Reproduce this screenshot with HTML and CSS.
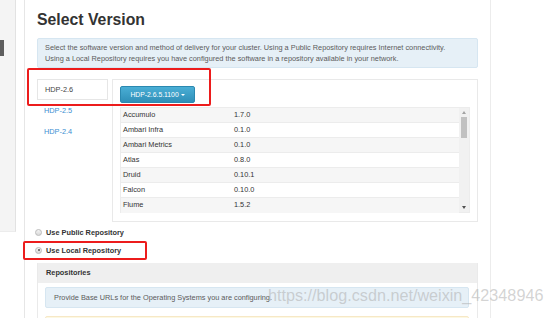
FILE: index.html
```html
<!DOCTYPE html>
<html>
<head>
<meta charset="utf-8">
<link rel="stylesheet" href="styles.css">
</head>
<body>
<div class="page">
  <aside class="side">
    <div class="side-panel"><div class="side-block"></div></div>
  </aside>
  <main class="main">
    <h1 class="title">Select Version</h1>
    <div class="alert-info">Select the software version and method of delivery for your cluster. Using a Public Repository requires Internet connectivity.<br>Using a Local Repository requires you have configured the software in a repository available in your network.</div>

    <div class="versions">
      <ul class="tabs">
        <li class="tab active">HDP-2.6</li>
        <li class="tab">HDP-2.5</li>
        <li class="tab">HDP-2.4</li>
      </ul>
      <div class="panel">
        <button class="btn">HDP-2.6.5.1100 <span class="caret"></span></button>
        <div class="table-wrap">
          <div class="rows">
            <div class="row odd"><span class="c1">Accumulo</span><span>1.7.0</span></div>
            <div class="row"><span class="c1">Ambari Infra</span><span>0.1.0</span></div>
            <div class="row odd"><span class="c1">Ambari Metrics</span><span>0.1.0</span></div>
            <div class="row"><span class="c1">Atlas</span><span>0.8.0</span></div>
            <div class="row odd"><span class="c1">Druid</span><span>0.10.1</span></div>
            <div class="row"><span class="c1">Falcon</span><span>0.10.0</span></div>
            <div class="row odd last"><span class="c1">Flume</span><span>1.5.2</span></div>
          </div>
          <div class="scrollbar">
            <span class="arrow up"></span>
            <span class="thumb"></span>
            <span class="spacer"></span>
            <span class="arrow down"></span>
          </div>
        </div>
      </div>
      <div class="mark mark-tabs"></div>
    </div>

    <div class="radios">
      <label class="radio"><span class="dot"></span>Use Public Repository</label>
      <label class="radio"><span class="dot checked"></span>Use Local Repository</label>
      <div class="mark mark-local"></div>
    </div>

    <div class="repos">
      <div class="repos-head">Repositories</div>
      <div class="repos-body">
        <div class="alert-info small">Provide Base URLs for the Operating Systems you are configuring.</div>
        <div class="alert-warn"></div>
      </div>
    </div>
  </main>
  <div class="rest"></div>
  <div class="watermark">https://blog.csdn.net/weixin_42348946</div>
</div>
</body>
</html>
```

FILE: styles.css
```css
* { box-sizing: border-box; }
html, body { margin: 0; padding: 0; background: #fff; }
body {
  width: 554px; height: 318px; overflow: hidden;
  font-family: "Liberation Sans", Arial, sans-serif;
  font-size: 7.35px; color: #333;
}
.page { position: relative; display: flex; width: 554px; height: 318px; }

.side { width: 24px; flex: none; }
.side-panel {
  width: 16px; height: 232px; background: #f4f4f4;
  border-right: 1px solid #e2e2e2; border-bottom: 1px solid #ececec;
  padding-top: 40px;
}
.side-block { width: 4px; height: 16px; background: #5e5e5e; }

.main {
  width: 467px; flex: none; height: 318px;
  border-left: 1px solid #e6e6e6; border-right: 1px solid #ececec;
  padding: 11px 12px 0 12px;
  position: relative;
}
.title {
  margin: 0 0 9px 0; font-size: 15.8px; line-height: 18px; font-weight: bold; color: #333;
}
.alert-info {
  background: #e6f0f7; border: 1px solid #d6e6f1; border-radius: 2px;
  color: #5b5b5b; line-height: 11px; padding: 3px 7px; height: 30px;
}

.versions { position: relative; display: flex; margin-top: 11px; }
.tabs { list-style: none; margin: 0; padding: 0; width: 75px; flex: none; }
.tab {
  height: 21px; line-height: 21px; padding-left: 7px; color: #3c8fd2; width: 71px;
}
.tab.active {
  color: #444; background: #fff; border: 1px solid #e6e6e6; line-height: 19px;
}
.panel {
  width: 366px; height: 143px; border: 1px solid #e9e9e9;
  padding: 6px 7px 0 7px;
}
.btn {
  display: block; width: 75px; height: 17px; padding: 0; margin: 0 0 4px 0;
  font-family: inherit; font-size: 6.8px; color: #fff;
  background: linear-gradient(#4aaed5, #2f8fb8);
  border: 1px solid #2b88b0; border-radius: 2px;
}
.caret {
  display: inline-block; width: 0; height: 0; vertical-align: middle;
  border-left: 2px solid transparent; border-right: 2px solid transparent; border-top: 2.5px solid #fff;
}
.table-wrap { display: flex; width: 350px; height: 106px; border: 1px solid #ececec; }
.rows { flex: 1; }
.row {
  display: flex; height: 15px; line-height: 14px; border-bottom: 1px solid #ececec;
  padding-left: 2px; color: #333; background: #fff;
}
.row.odd { background: #f6f6f6; }
.row.last { border-bottom: none; }
.c1 { width: 111px; }
.scrollbar {
  width: 10px; flex: none; background: #f1f1f1;
  display: flex; flex-direction: column; align-items: center; padding: 3px 0;
}
.arrow { width: 0; height: 0; border-left: 2.5px solid transparent; border-right: 2.5px solid transparent; }
.arrow.up { border-bottom: 3px solid #a3a3a3; }
.arrow.down { border-top: 3px solid #505050; }
.thumb { width: 6px; height: 21px; background: #c1c1c1; margin-top: 3px; }
.spacer { flex: 1; }

.mark { position: absolute; border: 2px solid #ec1c1c; border-radius: 2px; }
.mark-tabs { left: -10px; top: -11px; width: 184px; height: 38px; }

.radios { position: relative; padding-top: 1px; }
.radio {
  display: flex; align-items: center; height: 18px; font-weight: bold; color: #333; margin-left: -2px;
}
.dot {
  width: 7px; height: 7px; border-radius: 50%; border: 1px solid #bbb;
  background: linear-gradient(#f4f4f4, #d8d8d8); margin-right: 4px; position: relative;
}
.dot.checked::after {
  content: ""; position: absolute; left: 1.5px; top: 1.5px; width: 2px; height: 2px;
  border-radius: 50%; background: #555;
}
.mark-local { left: -14px; top: 19px; width: 124px; height: 19px; }

.repos { margin-top: 4px; border-left: 1px solid #eaeaea; border-right: 1px solid #eaeaea; }
.repos-head {
  height: 20px; line-height: 20px; background: #efefef; padding-left: 8px; font-weight: bold; color: #333;
}
.repos-body { padding: 4px 8px 0 7px; }
.alert-info.small { height: 21px; line-height: 19px; padding: 0 8px; }
.alert-warn {
  margin-top: 8px; height: 12px; background: #fcf8e3; border: 1px solid #f7e8c6; border-radius: 2px;
}

.rest { flex: 1; }
.watermark {
  position: absolute; left: 268px; top: 286px;
  font-family: "Liberation Sans", Arial, sans-serif; font-size: 16.2px;
  color: rgba(175, 175, 175, 0.55); white-space: nowrap;
}
```
